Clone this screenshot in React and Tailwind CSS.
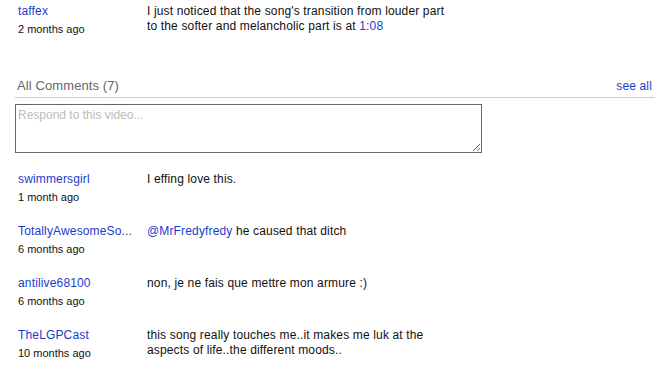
import React from 'react'

const comments = [
  { user: 'swimmersgirl', age: '1 month ago', text: <>I effing love this.</> },
  {
    user: 'TotallyAwesomeSo...',
    age: '6 months ago',
    text: (
      <>
        <a href="#" className="text-[#1a3ccc]">@MrFredyfredy</a> he caused that ditch
      </>
    ),
  },
  { user: 'antilive68100', age: '6 months ago', text: <>non, je ne fais que mettre mon armure :)</> },
  {
    user: 'TheLGPCast',
    age: '10 months ago',
    text: <>this song really touches me..it makes me luk at the aspects of life..the different moods..</>,
  },
]

const Comment = ({ user, age, children }) => (
  <div className="flex pl-[18px]">
    <div className="w-[129px] shrink-0">
      <a href="#" className="block text-[12px] leading-[15px] tracking-[0.15px] text-[#1a3ccc] whitespace-nowrap">
        {user}
      </a>
      <div className="mt-[3px] text-[11px] leading-[15px] text-[#111]">{age}</div>
    </div>
    <div className="w-[300px] text-[12px] leading-[15px] tracking-[0.15px] text-[#111]">{children}</div>
  </div>
)

export default function App() {
  return (
    <div className="w-[666px] h-[371px] overflow-hidden bg-white font-['Liberation_Sans',Arial,sans-serif]">
      {/* top comment */}
      <div className="pt-[4px]">
        <Comment user="taffex" age="2 months ago">
          I just noticed that the song's transition from louder part to the softer and melancholic part is at{' '}
          <a href="#" className="text-[#1a3ccc]">1:08</a>
        </Comment>
      </div>

      {/* all comments header */}
      <div className="mt-[41px] ml-[15px] w-[640px] flex items-end justify-between border-b border-[#ccc] pb-[3px] pl-[2px] pr-[3px]">
        <span className="text-[13px] leading-[16px] tracking-[0.1px] text-[#666]">All Comments (7)</span>
        <a href="#" className="text-[12px] leading-[16px] tracking-[0.15px] text-[#1a3ccc]">see all</a>
      </div>

      <div className="pl-[15px] mt-[6px]">
        <textarea
          placeholder="Respond to this video..."
          className="block w-[467px] h-[49px] border border-[#666] px-[2px] pt-[3px] text-[12px] leading-[15px] placeholder:text-[#bbb] outline-none"
        />
      </div>

      {/* comment list */}
      <div className="mt-[19px] flex flex-col gap-[19px]">
        {comments.map((c) => (
          <Comment key={c.user} user={c.user} age={c.age}>
            {c.text}
          </Comment>
        ))}
      </div>
    </div>
  )
}
